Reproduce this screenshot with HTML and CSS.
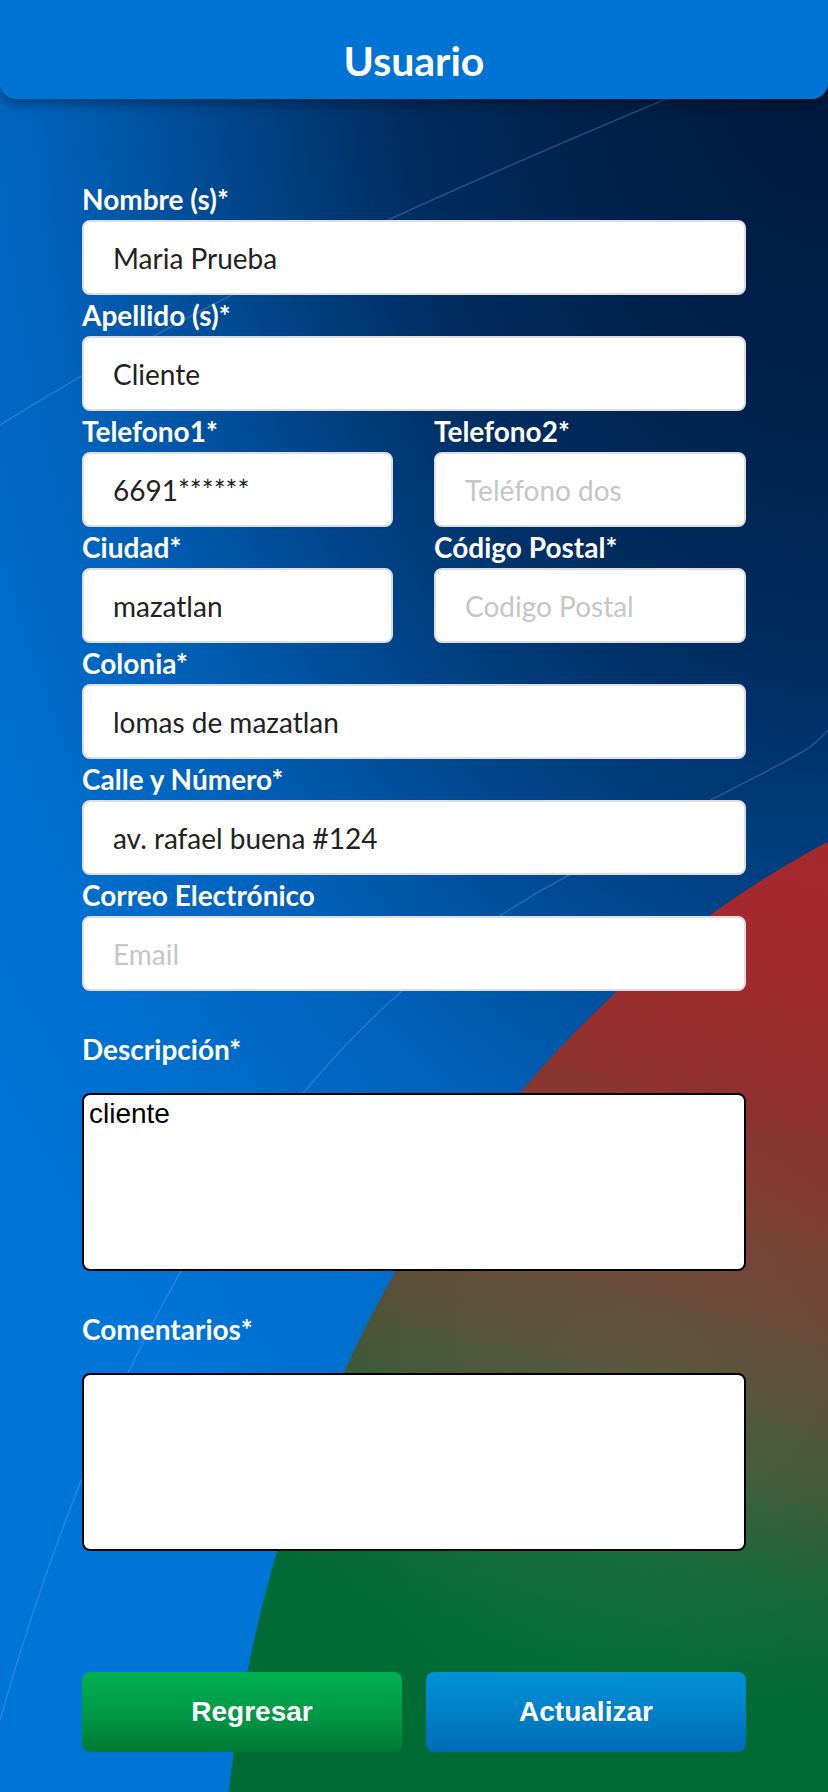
FILE: index.html
```html
<!DOCTYPE html>
<html lang="es">
<head>
<meta charset="utf-8">
<title>Usuario</title>
<link rel="stylesheet" href="styles.css">
</head>
<body>
<div class="page">
  <svg class="bg-lines" width="828" height="1792" viewBox="0 0 828 1792" aria-hidden="true">
    <path d="M0 425 C 200 300, 420 200, 760 60" fill="none" stroke="rgba(120,180,255,0.28)" stroke-width="1.5"/>
    <path d="M0 1720 C 120 1300, 300 1020, 560 880 S 800 760, 828 730" fill="none" stroke="rgba(120,180,255,0.28)" stroke-width="1.5"/>
  </svg>
  <header class="topbar">
    <h1 class="title">Usuario</h1>
  </header>
  <form class="form">
    <div class="field">
      <label class="label">Nombre (s)*</label>
      <input class="input" type="text" value="Maria Prueba">
    </div>
    <div class="field">
      <label class="label">Apellido (s)*</label>
      <input class="input" type="text" value="Cliente">
    </div>
    <div class="row">
      <div class="field">
        <label class="label">Telefono1*</label>
        <input class="input" type="text" value="6691******">
      </div>
      <div class="field">
        <label class="label">Telefono2*</label>
        <input class="input" type="text" placeholder="Teléfono dos">
      </div>
    </div>
    <div class="row">
      <div class="field">
        <label class="label">Ciudad*</label>
        <input class="input" type="text" value="mazatlan">
      </div>
      <div class="field">
        <label class="label">Código Postal*</label>
        <input class="input" type="text" placeholder="Codigo Postal">
      </div>
    </div>
    <div class="field">
      <label class="label">Colonia*</label>
      <input class="input" type="text" value="lomas de mazatlan">
    </div>
    <div class="field">
      <label class="label">Calle y Número*</label>
      <input class="input" type="text" value="av. rafael buena #124">
    </div>
    <div class="field">
      <label class="label">Correo Electrónico</label>
      <input class="input" type="text" placeholder="Email">
    </div>
    <div class="field area">
      <label class="label">Descripción*</label>
      <textarea class="textarea">cliente</textarea>
    </div>
    <div class="field area">
      <label class="label">Comentarios*</label>
      <textarea class="textarea"></textarea>
    </div>
    <div class="actions">
      <button type="button" class="btn btn-green">Regresar</button>
      <button type="button" class="btn btn-blue">Actualizar</button>
    </div>
  </form>
</div>
</body>
</html>
```

FILE: styles.css
```css
* { box-sizing: border-box; }

html, body {
  margin: 0;
  padding: 0;
}

body {
  font-family: Lato, "Noto Sans", sans-serif;
  background: #0070d0;
}

.page {
  position: relative;
  width: 828px;
  height: 1792px;
  overflow: hidden;
  background:
    radial-gradient(ellipse 900px 1400px at 100% 0%,
      #00173a 0%,
      #00224d 30%,
      #002d60 48%,
      #003f80 62%,
      #0062bb 88%,
      #006ecd 105%,
      #0075d8 122%);
}

.page::before {
  content: "";
  position: absolute;
  inset: 0;
  clip-path: ellipse(1030px 1215px at 1250px 1950px);
  background:
    radial-gradient(circle 330px at 620px 1430px, rgba(255,255,255,0.05), rgba(255,255,255,0) 100%),
    linear-gradient(195deg,
      #a8282e 0%,
      #a8282e 40%,
      #a02a2e 50%,
      #8e332f 56%,
      #744133 63%,
      #5a4d35 69%,
      #3f5835 74%,
      #106835 80%,
      #006b35 86%,
      #006a34 100%);
}

.bg-lines {
  position: absolute;
  top: 0;
  left: 0;
  pointer-events: none;
}

.topbar {
  position: relative;
  z-index: 2;
  height: 99px;
  padding-top: 37px;
  background: #0074d5;
  border-radius: 0 0 16px 16px;
  box-shadow: 0 5px 12px rgba(0, 0, 0, 0.35);
  text-align: center;
}

.title {
  margin: 0;
  font-family: Lato, sans-serif;
  font-weight: 700;
  font-size: 41px;
  line-height: 48px;
  color: #ffffff;
}

.form {
  position: relative;
  z-index: 1;
  padding: 85px 82px 40px;
  display: flex;
  flex-direction: column;
  gap: 5px;
}

.row {
  display: grid;
  grid-template-columns: 311px 312px;
  column-gap: 41px;
}

.field {
  display: flex;
  flex-direction: column;
}

.label {
  display: block;
  font-family: Lato, sans-serif;
  font-weight: 700;
  font-size: 28px;
  line-height: 30px;
  color: #ffffff;
  margin-bottom: 6px;
}

.input {
  width: 100%;
  height: 75px;
  margin: 0;
  padding: 0 20px 0 29px;
  border: 2px solid #dedede;
  border-radius: 8px;
  background: #ffffff;
  font-family: Lato, sans-serif;
  font-size: 28px;
  color: #222222;
  outline: none;
}

.input::placeholder {
  color: #c6c6c6;
  opacity: 1;
}

.area {
  margin-top: 38px;
}

.area .label {
  margin-bottom: 29px;
}

.textarea {
  display: block;
  width: 100%;
  height: 178px;
  margin: 0;
  padding: 3px 5px;
  border: 2px solid #000000;
  border-radius: 8px;
  background: #ffffff;
  font-family: "Liberation Sans", Arial, sans-serif;
  font-size: 28px;
  line-height: 32px;
  color: #000000;
  resize: none;
  outline: none;
}

.actions {
  display: grid;
  grid-template-columns: 1fr 1fr;
  column-gap: 24px;
  margin-top: 116px;
}

.btn {
  height: 80px;
  border: none;
  border-radius: 8px;
  font-family: "Liberation Sans", Arial, sans-serif;
  font-weight: 700;
  font-size: 28px;
  color: #ffffff;
  cursor: pointer;
}

.btn-green {
  padding-left: 26px;
  background: linear-gradient(180deg, #00b152 0%, #009a46 50%, #007a35 100%);
}

.btn-blue {
  background: linear-gradient(180deg, #0091d6 0%, #0080c8 50%, #006bb8 100%);
}
```
